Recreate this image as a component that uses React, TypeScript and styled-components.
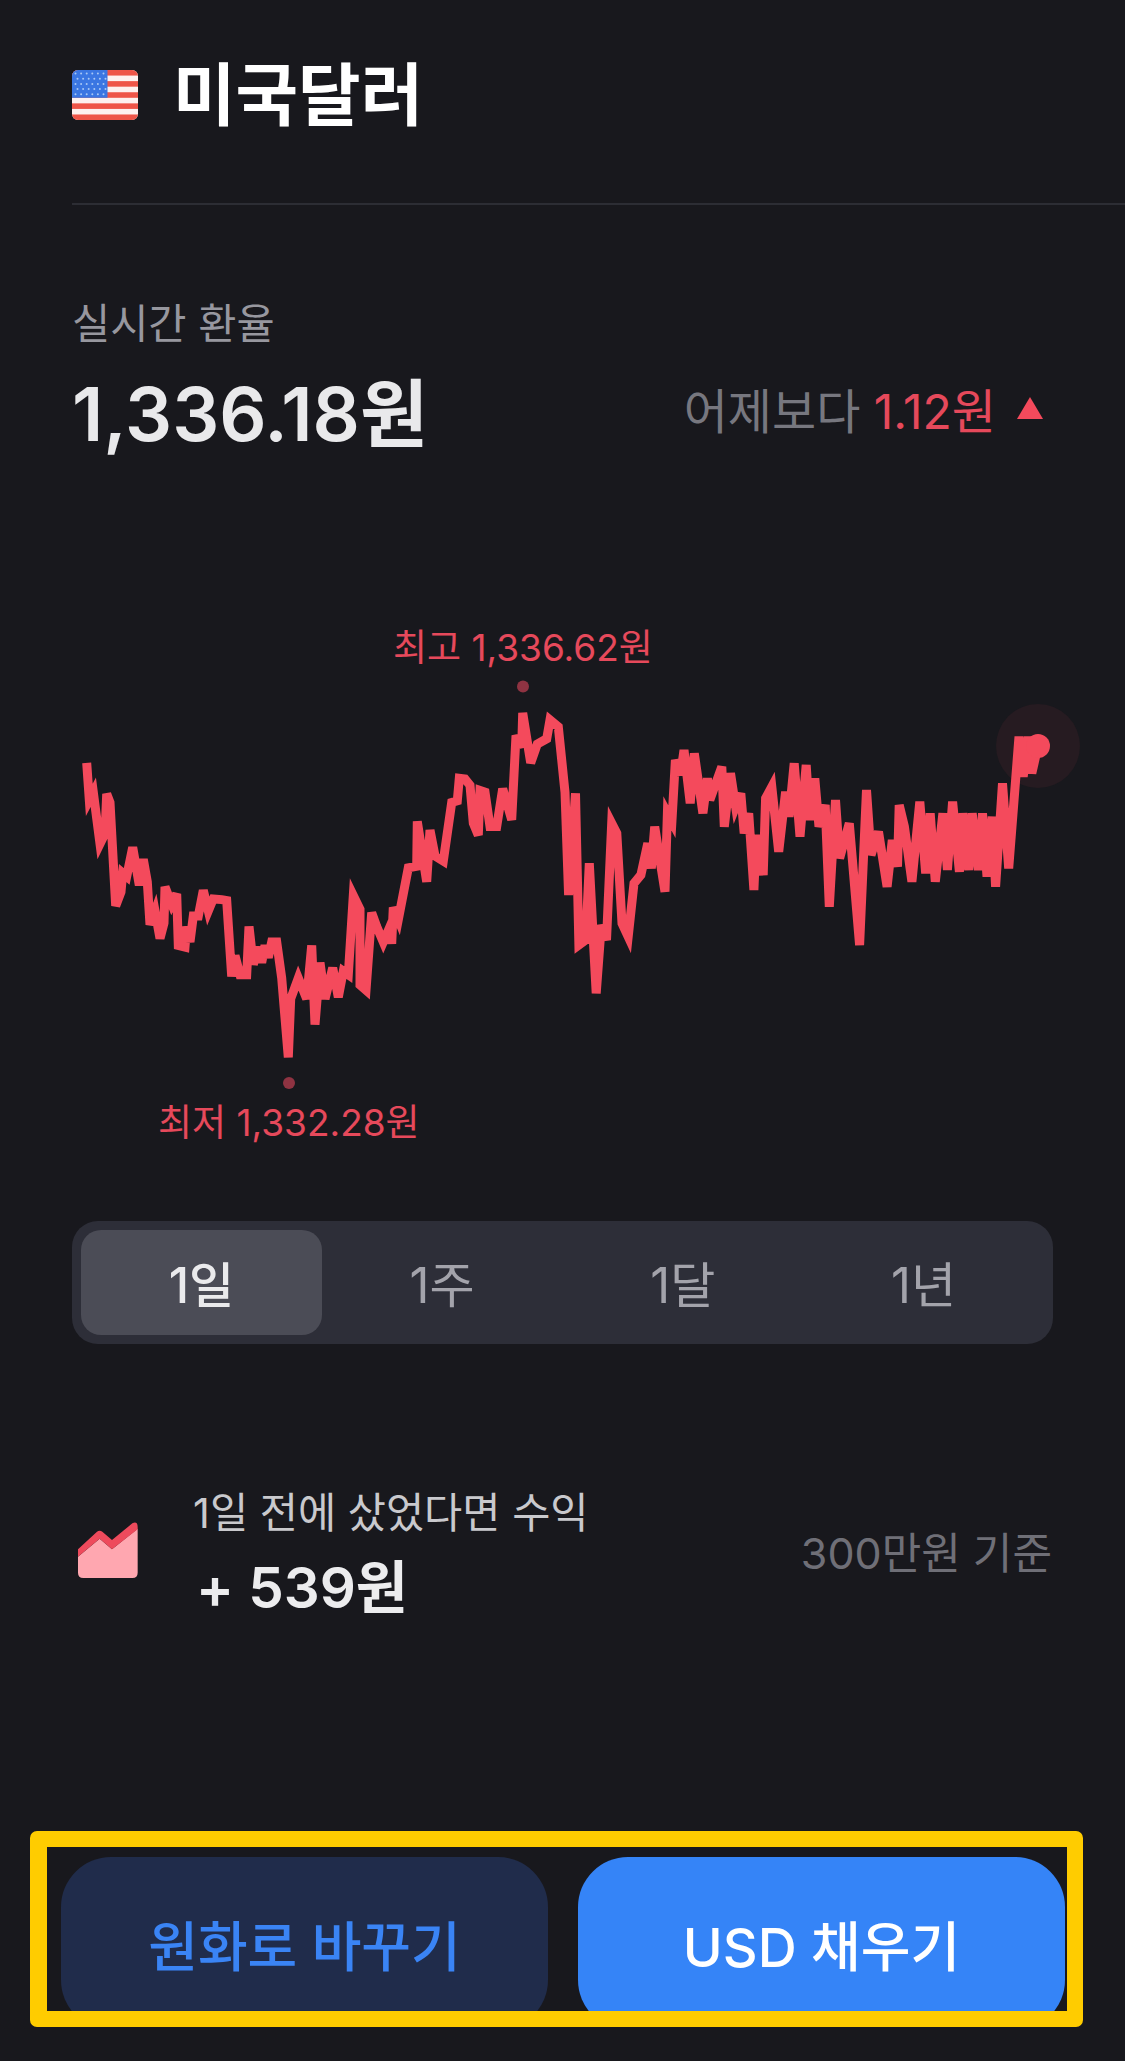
import React, {FC} from 'react';
import styled, {createGlobalStyle} from 'styled-components';

const bgColor = '#18181d';
const redColor = '#f44a5c';
const labelRed = '#e6495b';
const fontStack = `Inter, "Noto Sans CJK KR", sans-serif`;

// traced from the two halves of the chart, x scale differs a bit
const leftTrace = [
    [110, 415], [118, 522], [130, 500], [150, 650], [165, 620], [170, 505], [180, 530], [197, 830], [213, 790], [218, 735],
    [230, 745], [248, 660], [268, 770], [280, 695], [292, 760], [300, 885], [315, 845], [330, 925], [342, 880], [345, 775],
    [365, 825], [380, 795], [385, 945], [405, 950], [410, 890], [420, 935], [430, 860], [445, 860], [460, 785], [475, 845],
    [490, 810], [515, 812], [530, 815], [545, 1035], [555, 975], [570, 1030], [590, 1030], [597, 890], [610, 1000], [625, 950],
    [635, 995], [645, 945], [655, 980], [665, 935], [680, 935], [695, 1040], [715, 1270], [722, 1100], [745, 1040], [770, 1100],
    [785, 945], [795, 1175], [810, 995], [825, 1100], [848, 1010], [865, 1095], [880, 1020], [895, 1030], [910, 800], [930, 840],
    [930, 1060], [948, 1075], [965, 850], [980, 890], [1000, 935], [1020, 890], [1025, 940], [1030, 835], [1045, 870], [1075, 720],
    [1100, 715], [1102, 585], [1130, 760], [1140, 610], [1155, 685], [1180, 700], [1205, 530], [1222, 525], [1228, 460], [1245, 462],
    [1260, 480], [1270, 590], [1285, 625], [1290, 495], [1305, 500], [1320, 600], [1340, 600], [1358, 490], [1385, 580], [1398, 335],
    [1415, 370], [1418, 270], [1442, 415], [1462, 360], [1490, 345], [1500, 290], [1525, 310], [1545, 500],
];
const rightTrace = [
    [25, 825], [45, 520], [55, 975], [75, 960], [85, 730], [105, 1120], [120, 915], [135, 960], [150, 610], [165, 640],
    [180, 910], [198, 950], [215, 790], [235, 765], [255, 670], [265, 745], [275, 620], [305, 815], [312, 580], [325, 605],
    [335, 420], [350, 465], [360, 390], [378, 550], [390, 400], [415, 580], [428, 475], [435, 540], [470, 440], [477, 620],
    [495, 460], [510, 560], [525, 520], [535, 640], [548, 580], [563, 810], [570, 645], [590, 765], [597, 535], [615, 500],
    [635, 695], [655, 515], [665, 590], [680, 430], [697, 650], [715, 435], [725, 600], [740, 475], [752, 620], [770, 555],
    [782, 860], [800, 540], [812, 715], [840, 610], [870, 975], [890, 510], [903, 705], [925, 635], [950, 800], [965, 660],
    [980, 740], [985, 555], [1000, 620], [1022, 785], [1045, 545], [1062, 760], [1075, 580], [1090, 785], [1112, 580], [1125, 750],
    [1140, 545], [1160, 755], [1170, 580], [1187, 750], [1197, 580], [1215, 750], [1227, 580], [1240, 770], [1255, 590], [1265, 800],
    [1285, 490], [1303, 745], [1333, 350], [1345, 470], [1360, 350], [1370, 460], [1388, 378],
];

const linePoints = [
    ...leftTrace.map(([x, y]) => [x / 3 + 50, y / 2.904 + 20]),
    ...rightTrace.map(([x, y]) => [x / 2.904 + 560, y / 3 + 20]),
].map(([x, y]) => `${x.toFixed(1)},${y.toFixed(1)}`).join(' ');

const tabs = ['1일', '1주', '1달', '1년'];

const FlagIcon: FC = () => (
    <svg width="66" height="50" viewBox="0 0 66 50">
        <defs>
            <clipPath id="flagClip">
                <rect width="66" height="50" rx="6"/>
            </clipPath>
        </defs>
        <g clipPath="url(#flagClip)">
            <rect width="66" height="50" fill="#fdf1ef"/>
            {[0, 2, 4, 6, 8].map(i => (
                <rect key={i} y={i * 5.56} width="66" height="5.56" fill="#ee5548"/>
            ))}
            <rect width="35.5" height="27.8" fill="#3a76e2"/>
            {[0, 1, 2, 3, 4].map(row =>
                [0, 1, 2, 3, 4, 5].map(col => (
                    <circle key={`${row}-${col}`} cx={3.5 + col * 5.6 + (row % 2) * 2} cy={3.5 + row * 5.2} r="1" fill="#a9c8f5"/>
                ))
            )}
        </g>
    </svg>
);

const ProfitIcon: FC = () => (
    <svg width="60" height="56" viewBox="55 68 180 168">
        <path d="M55 172 L120 118 L157 150 L234 88 V220 Q234 236 218 236 H71 Q55 236 55 220 Z" fill="#ffa7b0"/>
        <path d="M55 150 L112 97 Q120 91 128 97 L157 122 L218 72 Q234 64 234 84 V90 L157 150 L120 118 L55 172 Z" fill="#ee4a5c"/>
    </svg>
);

const App: FC = () => {
    return (
        <Page>
            <GlobalStyle/>
            <TitleRow>
                <FlagIcon/>
                <Title>미국달러</Title>
            </TitleRow>
            <Divider/>
            <RateLabel>실시간 환율</RateLabel>
            <RateRow>
                <RateValue>1,336.18원</RateValue>
                <RateDiff>
                    <span>어제보다 <RateDiffValue>1.12원</RateDiffValue></span>
                    <svg width="26" height="22" viewBox="0 0 26 22">
                        <path d="M13 0 L26 22 H0 Z" fill={redColor}/>
                    </svg>
                </RateDiff>
            </RateRow>
            <Chart>
                <svg width="1125" height="600" viewBox="0 0 1125 600">
                    <circle cx="1038" cy="146" r="42" fill="#261b21"/>
                    <polyline points={linePoints} fill="none" stroke={redColor} strokeWidth="9" strokeLinejoin="miter"/>
                    <circle cx="1038" cy="146" r="12" fill={redColor}/>
                    <circle cx="523" cy="86.5" r="6" fill="#8f3342"/>
                    <circle cx="289" cy="483" r="6" fill="#8f3342"/>
                </svg>
                <ChartLabel $left={393} $top={26}>최고 1,336.62원</ChartLabel>
                <ChartLabel $left={158} $top={501}>최저 1,332.28원</ChartLabel>
            </Chart>
            <Tabs>
                {tabs.map((tab, i) => (
                    <Tab key={tab} $active={i === 0}>{tab}</Tab>
                ))}
            </Tabs>
            <InfoRow>
                <ProfitIcon/>
                <InfoText>
                    <InfoTitle>1일 전에 샀었다면 수익</InfoTitle>
                    <InfoValue>+ 539원</InfoValue>
                </InfoText>
                <InfoBasis>300만원 기준</InfoBasis>
            </InfoRow>
            <Frame>
                <ActionButton $primary={false}>원화로 바꾸기</ActionButton>
                <ActionButton $primary={true}>USD 채우기</ActionButton>
            </Frame>
        </Page>
    );
};

export default App;

const GlobalStyle = createGlobalStyle`
  html, body {
    margin: 0;
    padding: 0;
    background-color: ${bgColor};
  }
`
const Page = styled.div`
  width: 1125px;
  height: 2061px;
  overflow: hidden;
  background-color: ${bgColor};
  font-family: ${fontStack};
`
const TitleRow = styled.div`
  display: flex;
  align-items: center;
  gap: 35px;
  height: 190px;
  padding-left: 72px;
`
const Title = styled.div`
  font-size: 68px;
  font-weight: 700;
  line-height: 1;
  color: #ffffff;
`
const Divider = styled.div`
  height: 2px;
  margin: 13px 0 0 72px;
  background-color: #2c2d34;
`
const RateLabel = styled.div`
  margin: 94px 0 0 72px;
  font-size: 41.5px;
  line-height: 50px;
  color: #97979f;
`
const RateRow = styled.div`
  display: flex;
  align-items: center;
  justify-content: space-between;
  height: 90px;
  margin-top: 14px;
  padding: 0 82px 0 72px;
`
const RateValue = styled.div`
  font-size: 74px;
  font-weight: 600;
  color: #e9e9eb;
`
const RateDiff = styled.div`
  display: flex;
  align-items: center;
  gap: 21px;
  font-size: 48px;
  color: #77777f;
  white-space: pre;
`
const RateDiffValue = styled.span`
  color: ${labelRed};
`
const Chart = styled.div`
  position: relative;
  height: 600px;
  margin-top: 147px;

  && > svg {
    display: block;
  }
`
const ChartLabel = styled.div<{ $left: number; $top: number }>`
  position: absolute;
  left: ${p => p.$left}px;
  top: ${p => p.$top}px;
  font-size: 37px;
  line-height: 44px;
  white-space: nowrap;
  color: ${labelRed};
`
const Tabs = styled.div`
  display: flex;
  width: 981px;
  height: 123px;
  box-sizing: border-box;
  margin: 21px 0 0 72px;
  padding: 9px;
  border-radius: 26px;
  background-color: #2d2e38;
`
const Tab = styled.div<{ $active: boolean }>`
  flex: 1;
  display: flex;
  align-items: center;
  justify-content: center;
  padding-bottom: 3px;
  border-radius: 20px;
  font-size: 49px;
  font-weight: ${p => (p.$active ? 500 : 400)};
  color: ${p => (p.$active ? '#eaeaec' : '#a3a3ab')};
  background-color: ${p => (p.$active ? '#4b4c56' : 'transparent')};
`
const InfoRow = styled.div`
  display: flex;
  align-items: center;
  height: 130px;
  margin-top: 141px;
  padding: 0 73px 0 78px;
`
const InfoText = styled.div`
  display: flex;
  flex-direction: column;
  gap: 18px;
  margin: 8px 0 0 55px;
  flex: 1;
`
const InfoTitle = styled.div`
  font-size: 41.5px;
  line-height: 50px;
  color: #c9c9cd;
`
const InfoValue = styled.div`
  font-size: 56.5px;
  font-weight: 600;
  line-height: 64px;
  padding-left: 3px;
  color: #ececee;
`
const InfoBasis = styled.div`
  font-size: 43px;
  color: #6f6f77;
`
const Frame = styled.div`
  display: flex;
  gap: 30px;
  box-sizing: border-box;
  width: 1053px;
  height: 196px;
  margin: 216px 0 0 30px;
  padding: 10px 2px 0 14px;
  border: solid #ffcc00;
  border-width: 16px 16px 16px 17px;
  border-radius: 7px;
  overflow: hidden;
`
const ActionButton = styled.div<{ $primary: boolean }>`
  flex: 1;
  flex-shrink: 0;
  height: 173px;
  display: flex;
  align-items: center;
  justify-content: center;
  border-radius: 50px;
  font-size: 54px;
  font-weight: 500;
  color: ${p => (p.$primary ? '#ffffff' : '#3a84f5')};
  background-color: ${p => (p.$primary ? '#3584f7' : '#202c4b')};
`
